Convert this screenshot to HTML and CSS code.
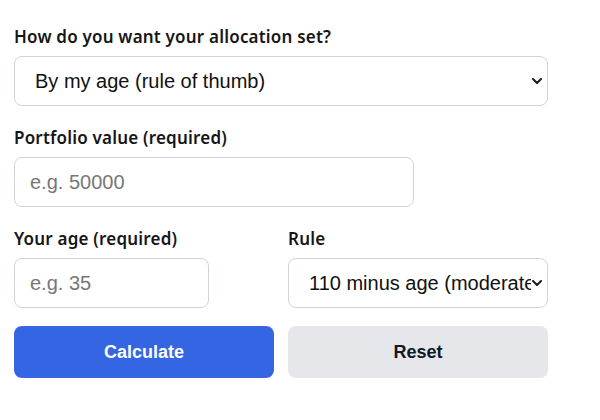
FILE: index.html
```html
<!DOCTYPE html>
<html lang="en">
<head>
    <meta charset="UTF-8">
    <meta name="viewport" content="width=device-width, initial-scale=1.0">
    <title>Allocation Calculator</title>
    <link rel="stylesheet" href="styles.css">
</head>
<body>
    <form class="calc" id="allocForm">
        <div class="field">
            <label for="mode">How do you want your allocation set?</label>
            <div class="select-wrap">
                <select id="mode" name="mode">
                    <option value="age">By my age (rule of thumb)</option>
                    <option value="risk">By my risk tolerance</option>
                </select>
                <svg class="chevron" width="10" height="6" viewBox="0 0 10 6"><path d="M1 1l4 4 4-4" fill="none" stroke="#1b1b1b" stroke-width="2" stroke-linecap="round" stroke-linejoin="round"/></svg>
            </div>
        </div>

        <div class="field">
            <label for="portfolio">Portfolio value (required)</label>
            <input type="number" id="portfolio" name="portfolio" placeholder="e.g. 50000" class="wide">
        </div>

        <div class="row">
            <div class="field">
                <label for="age">Your age (required)</label>
                <input type="number" id="age" name="age" placeholder="e.g. 35" class="narrow">
            </div>
            <div class="field">
                <label for="rule">Rule</label>
                <div class="select-wrap">
                    <select id="rule" name="rule">
                        <option value="110">110 minus age (moderate)</option>
                        <option value="100">100 minus age (conservative)</option>
                        <option value="120">120 minus age (aggressive)</option>
                    </select>
                    <svg class="chevron" width="10" height="6" viewBox="0 0 10 6"><path d="M1 1l4 4 4-4" fill="none" stroke="#1b1b1b" stroke-width="2" stroke-linecap="round" stroke-linejoin="round"/></svg>
                </div>
            </div>
        </div>

        <div class="row buttons">
            <button type="submit" class="btn primary">Calculate</button>
            <button type="reset" class="btn secondary">Reset</button>
        </div>
    </form>
</body>
</html>
```

FILE: styles.css
```css
body {
    margin: 0;
    padding: 25px 14px;
    background-color: #fff;
    font-family: "Liberation Sans", Arial, sans-serif;
}

.calc {
    width: 534px;
    display: flex;
    flex-direction: column;
    gap: 20px;
}

.field {
    display: flex;
    flex-direction: column;
    gap: 7px;
    min-width: 0;
}

label {
    font-family: "Noto Sans", "Open Sans", sans-serif;
    font-weight: 600;
    font-size: 17px;
    line-height: 24px;
    letter-spacing: 0.2px;
    color: #161616;
}

input,
select {
    box-sizing: border-box;
    height: 50px;
    padding: 0 15px;
    border: 1px solid #cfd4dc;
    border-radius: 8px;
    background-color: #fff;
    font-family: "Liberation Sans", Arial, sans-serif;
    font-size: 20px;
    color: #111;
}

.select-wrap {
    position: relative;
}

select {
    width: 100%;
    appearance: none;
    padding: 0 16px 0 20px;
}

.chevron {
    position: absolute;
    right: 6px;
    top: 22px;
    pointer-events: none;
}

input::placeholder {
    color: #777;
}

.wide {
    width: 400px;
}

.narrow {
    width: 195px;
}

.row {
    display: grid;
    grid-template-columns: minmax(0, 1fr) minmax(0, 1fr);
    gap: 14px;
}

.buttons {
    margin-top: -2px;
}

.btn {
    height: 52px;
    border: none;
    border-radius: 8px;
    font-family: "Liberation Sans", Arial, sans-serif;
    font-size: 18px;
    font-weight: bold;
    cursor: pointer;
}

.primary {
    background-color: #3466e4;
    color: #fff;
}

.secondary {
    background-color: #e5e7eb;
    color: #111827;
}
```
